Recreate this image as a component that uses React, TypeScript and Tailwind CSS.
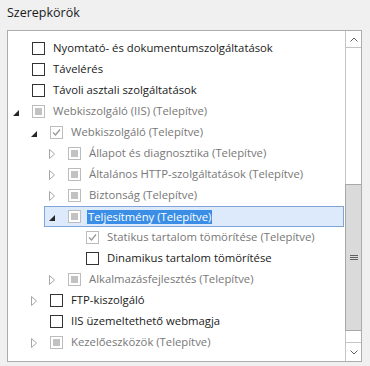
import React from 'react';

type Box = 'empty' | 'partial' | 'check';
type Arrow = 'none' | 'open' | 'closed';

interface Row {
  level: number;
  arrow: Arrow;
  box: Box;
  label: string;
  muted?: boolean;
  selected?: boolean;
}

const rows: Row[] = [
  { level: 0, arrow: 'none', box: 'empty', label: 'Nyomtató- és dokumentumszolgáltatások' },
  { level: 0, arrow: 'none', box: 'empty', label: 'Távelérés' },
  { level: 0, arrow: 'none', box: 'empty', label: 'Távoli asztali szolgáltatások' },
  { level: 0, arrow: 'open', box: 'partial', label: 'Webkiszolgáló (IIS) (Telepítve)', muted: true },
  { level: 1, arrow: 'open', box: 'check', label: 'Webkiszolgáló (Telepítve)', muted: true },
  { level: 2, arrow: 'closed', box: 'partial', label: 'Állapot és diagnosztika (Telepítve)', muted: true },
  { level: 2, arrow: 'closed', box: 'partial', label: 'Általános HTTP-szolgáltatások (Telepítve)', muted: true },
  { level: 2, arrow: 'closed', box: 'partial', label: 'Biztonság (Telepítve)', muted: true },
  { level: 2, arrow: 'open', box: 'partial', label: 'Teljesítmény (Telepítve)', muted: true, selected: true },
  { level: 3, arrow: 'none', box: 'check', label: 'Statikus tartalom tömörítése (Telepítve)', muted: true },
  { level: 3, arrow: 'none', box: 'empty', label: 'Dinamikus tartalom tömörítése' },
  { level: 2, arrow: 'closed', box: 'partial', label: 'Alkalmazásfejlesztés (Telepítve)', muted: true },
  { level: 1, arrow: 'closed', box: 'empty', label: 'FTP-kiszolgáló' },
  { level: 1, arrow: 'none', box: 'empty', label: 'IIS üzemeltethető webmagja' },
  { level: 1, arrow: 'closed', box: 'partial', label: 'Kezelőeszközök (Telepítve)', muted: true },
];

const indent = ['pl-0', 'pl-[18px]', 'pl-[36px]', 'pl-[54px]'];

function Expander({ arrow }: { arrow: Arrow }) {
  return (
    <div className="w-[23px] h-full flex items-center">
      {arrow === 'open' && (
        <svg className="ml-[4px] mt-[3px]" width="6" height="6" viewBox="0 0 6 6">
          <polygon points="6,0 6,6 0,6" fill="#262626" />
        </svg>
      )}
      {arrow === 'closed' && (
        <svg className="ml-[4px]" width="6" height="10" viewBox="0 0 6 10">
          <polygon points="0.5,0.5 5.5,5 0.5,9.5" fill="none" stroke="#a6a6a6" strokeWidth="1" />
        </svg>
      )}
    </div>
  );
}

function CheckBox({ box }: { box: Box }) {
  if (box === 'empty') {
    return <div className="w-[13px] h-[13px] shrink-0 bg-white border border-[#333333]" />;
  }
  return (
    <div className="w-[13px] h-[13px] shrink-0 bg-white border border-[#bcbcbc] flex items-center justify-center">
      {box === 'partial' ? (
        <div className="w-[7px] h-[7px] bg-[#c2c2c2]" />
      ) : (
        <svg width="9" height="9" viewBox="0 0 9 9">
          <path d="M1 4.5 L3.5 7 L8 1.5" fill="none" stroke="#9a9a9a" strokeWidth="1.4" />
        </svg>
      )}
    </div>
  );
}

function TreeRow({ row }: { row: Row }) {
  return (
    <div className={`h-[21px] ${indent[row.level]}`}>
      <div
        className={
          row.selected
            ? 'h-[21px] mr-[1px] flex items-center bg-[#dceafb] border border-[#7fa6d6]'
            : 'h-[21px] flex items-center border border-transparent'
        }
      >
        <Expander arrow={row.arrow} />
        <CheckBox box={row.box} />
        <span
          className={
            row.selected
              ? 'ml-[6px] px-[1px] leading-[14px] bg-[#3a8ee6] text-white whitespace-nowrap'
              : `ml-[8px] whitespace-nowrap ${row.muted ? 'text-[#777777]' : 'text-[#1a1a1a]'}`
          }
        >
          {row.label}
        </span>
      </div>
    </div>
  );
}

function ScrollBar() {
  return (
    <div className="w-[16px] flex flex-col border-l border-[#c4c4c4]">
      <div className="h-[17px] border-b border-[#c4c4c4] flex items-center justify-center">
        <svg width="8" height="5" viewBox="0 0 8 5">
          <path d="M0.5 4.5 L4 1 L7.5 4.5" fill="none" stroke="#606060" strokeWidth="1" />
        </svg>
      </div>
      <div className="flex-1 flex flex-col">
        <div className="mt-[136px] -ml-[1px] h-[147px] bg-[#dadada] border-l border-y border-[#a8a8a8] flex items-center justify-center">
          <div className="flex flex-col gap-[1px]">
            <div className="w-[8px] h-[1px] bg-[#606060]" />
            <div className="w-[8px] h-[1px] bg-[#606060]" />
            <div className="w-[8px] h-[1px] bg-[#606060]" />
          </div>
        </div>
      </div>
      <div className="h-[19px] border-t border-[#c4c4c4] flex items-center justify-center">
        <svg width="8" height="5" viewBox="0 0 8 5">
          <path d="M0.5 0.5 L4 4 L7.5 0.5" fill="none" stroke="#606060" strokeWidth="1" />
        </svg>
      </div>
    </div>
  );
}

export default function App() {
  return (
    <div
      className="w-[370px] h-[366px] bg-[#f0f0f0] px-[7px] text-[11.3px]"
      style={{ fontFamily: '"Open Sans", "Noto Sans", sans-serif' }}
    >
      <div className="h-[30px] pt-[5px] text-[12.5px] text-[#1a1a1a] leading-[16px]">Szerepkörök</div>
      <div className="w-[355px] h-[332px] bg-white border border-[#acacac] flex">
        <div className="flex-1 overflow-hidden pt-[7px]">
          {rows.map((row, i) => (
            <TreeRow key={i} row={row} />
          ))}
        </div>
        <ScrollBar />
      </div>
    </div>
  );
}
